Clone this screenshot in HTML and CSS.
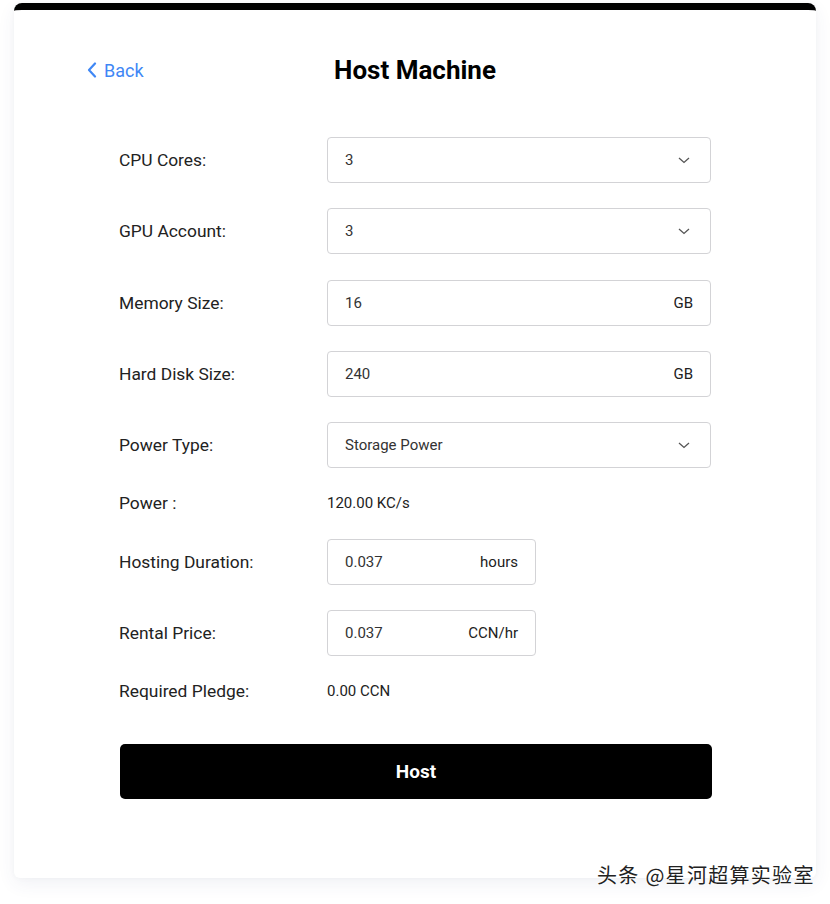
FILE: index.html
```html
<!DOCTYPE html>
<html>
<head>
<meta charset="utf-8">
<link rel="stylesheet" href="styles.css">
</head>
<body>
<div class="card">
  <div class="header">
    <a class="back">
      <svg class="back-icon" width="10" height="16" viewBox="0 0 10 16"><path d="M8 1.5 L2 8 L8 14.5" fill="none" stroke="#3f87f5" stroke-width="2.2" stroke-linecap="round" stroke-linejoin="round"/></svg>
      <span>Back</span>
    </a>
    <h1 class="title">Host Machine</h1>
    <div></div>
  </div>
  <div class="form">
    <div class="row">
      <div class="label">CPU Cores:</div>
      <div class="field"><span>3</span><svg class="chev" width="12" height="7" viewBox="0 0 12 7"><path d="M1 1 L6 5.5 L11 1" fill="none" stroke="#555" stroke-width="1.3"/></svg></div>
    </div>
    <div class="row">
      <div class="label">GPU Account:</div>
      <div class="field"><span>3</span><svg class="chev" width="12" height="7" viewBox="0 0 12 7"><path d="M1 1 L6 5.5 L11 1" fill="none" stroke="#555" stroke-width="1.3"/></svg></div>
    </div>
    <div class="row">
      <div class="label">Memory Size:</div>
      <div class="field"><span>16</span><span class="unit">GB</span></div>
    </div>
    <div class="row">
      <div class="label">Hard Disk Size:</div>
      <div class="field"><span>240</span><span class="unit">GB</span></div>
    </div>
    <div class="row">
      <div class="label">Power Type:</div>
      <div class="field"><span>Storage Power</span><svg class="chev" width="12" height="7" viewBox="0 0 12 7"><path d="M1 1 L6 5.5 L11 1" fill="none" stroke="#555" stroke-width="1.3"/></svg></div>
    </div>
    <div class="row text-row">
      <div class="label">Power :</div>
      <div class="value">120.00 KC/s</div>
    </div>
    <div class="row">
      <div class="label">Hosting Duration:</div>
      <div class="field short"><span>0.037</span><span class="unit">hours</span></div>
    </div>
    <div class="row">
      <div class="label">Rental Price:</div>
      <div class="field short"><span>0.037</span><span class="unit">CCN/hr</span></div>
    </div>
    <div class="row text-row">
      <div class="label">Required Pledge:</div>
      <div class="value">0.00 CCN</div>
    </div>
    <button class="host-btn">Host</button>
  </div>
</div>
<div class="watermark">头条 @星河超算实验室</div>
</body>
</html>
```

FILE: styles.css
```css
* { box-sizing: border-box; }
html, body {
  margin: 0;
  padding: 0;
  background: #ffffff;
  font-family: Roboto, "Liberation Sans", sans-serif;
  color: #1f1f1f;
}
body {
  width: 830px;
  height: 904px;
  position: relative;
  overflow: hidden;
  padding-top: 3px;
}
.card {
  margin: 0 14px;
  height: 875px;
  background: #fff;
  border-top: 7px solid #000;
  border-radius: 8px 8px 6px 6px;
  box-shadow: 0 6px 18px rgba(60, 70, 130, 0.07), 0 0 6px rgba(0,0,0,0.03);
  padding-top: 40px;
}
.header {
  display: grid;
  grid-template-columns: 1fr auto 1fr;
  align-items: center;
  height: 40px;
  padding: 0 73px;
}
.back {
  display: flex;
  align-items: center;
  gap: 7px;
  color: #3f87f5;
  font-size: 18px;
  cursor: pointer;
}
.title {
  margin: 0;
  font-size: 26px;
  font-weight: 700;
  color: #000;
  letter-spacing: 0;
}
.form {
  margin-top: 47px;
  padding: 0 105px;
  display: flex;
  flex-direction: column;
  gap: 25.3px;
}
.row {
  display: grid;
  grid-template-columns: 208px 1fr;
  align-items: center;
}
.label {
  font-size: 17.4px;
  color: #222;
}
.field {
  height: 46px;
  border: 1px solid #d3d3d6;
  border-radius: 4px;
  display: flex;
  align-items: center;
  justify-content: space-between;
  padding: 0 20px 0 17px;
  font-size: 15px;
  color: #333;
}
.field .unit { margin-right: -3px; }
.field.short {
  width: 209px;
  padding-right: 17px;
}
.field.short .unit { margin-right: 0; }
.unit { color: #222; }
.text-row { height: 20px; }
.value {
  font-size: 15px;
  color: #222;
}
.host-btn {
  margin-top: 17px;
  margin-left: 1px;
  height: 55px;
  width: 592px;
  border: none;
  border-radius: 5px;
  background: #000;
  color: #fff;
  font-family: Roboto, "Liberation Sans", sans-serif;
  font-size: 19px;
  font-weight: 700;
}
.watermark {
  position: absolute;
  left: 597px;
  top: 860px;
  font-family: "Noto Sans CJK SC", sans-serif;
  font-size: 20px;
  color: #222;
  letter-spacing: 1.3px;
  text-shadow: 0 0 2px #fff, 0 0 3px #fff;
}
```
